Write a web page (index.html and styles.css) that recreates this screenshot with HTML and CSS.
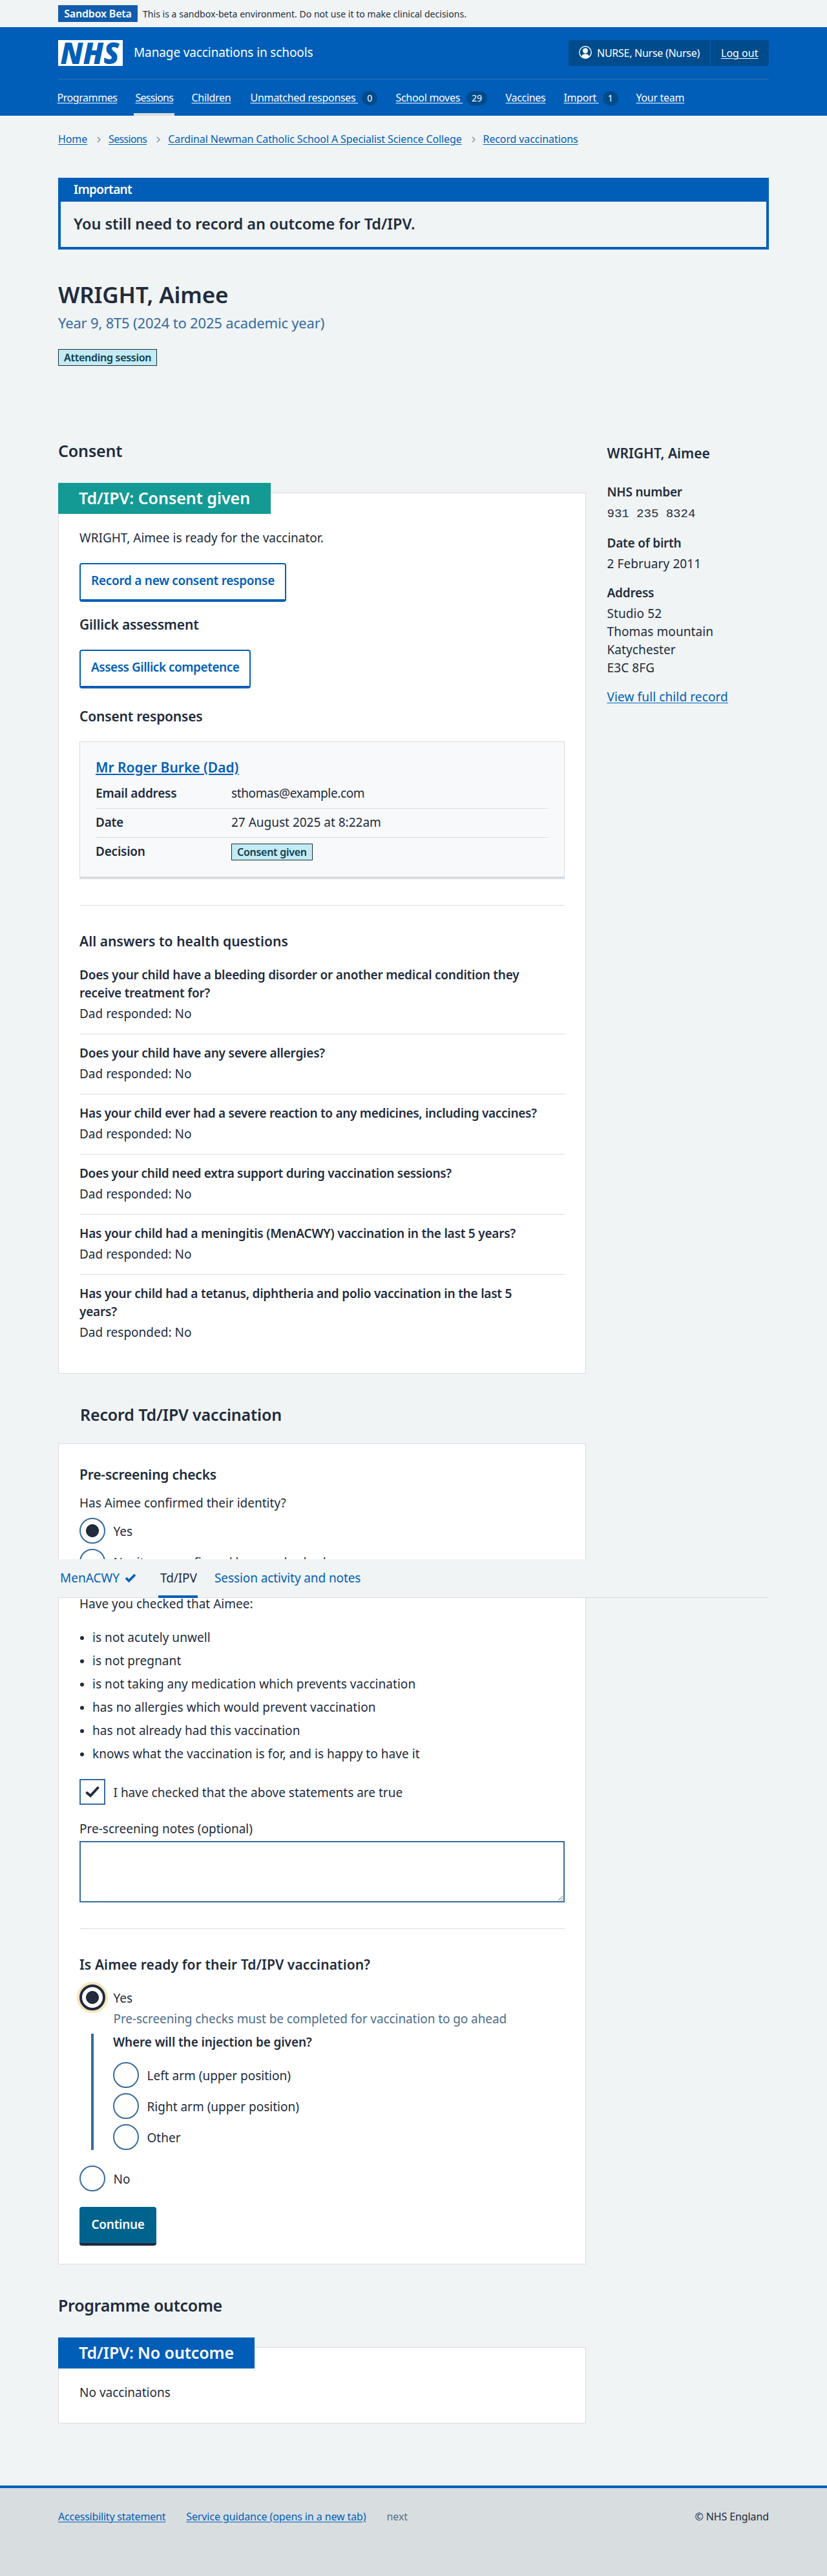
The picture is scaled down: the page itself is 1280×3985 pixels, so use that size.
FILE: index.html
```html
<!DOCTYPE html>
<html lang="en">
<head>
<meta charset="utf-8">
<title>WRIGHT, Aimee – Manage vaccinations in schools</title>
<link rel="stylesheet" href="styles.css">
</head>
<body>
<div class="environment container">
  <strong class="environment-tag">Sandbox Beta</strong>
  <span class="environment-text">This is a sandbox-beta environment. Do not use it to make clinical decisions.</span>
</div>

<header class="header">
  <div class="container">
    <div class="header-main">
      <svg class="logo" width="100" height="40" viewBox="0 0 100 40" role="img" aria-label="NHS">
        <rect width="100" height="40" fill="#fff"/>
        <text x="3.500" y="36.500" textLength="91" lengthAdjust="spacingAndGlyphs">NHS</text>
      </svg>
      <span class="service-name">Manage vaccinations in schools</span>
      <div class="account">
        <span class="account-user">
          <svg width="20" height="20" viewBox="0 0 20 20" aria-hidden="true">
            <defs><clipPath id="head"><circle cx="10" cy="10" r="9"/></clipPath></defs>
            <circle cx="10" cy="10" r="9.2" fill="none" stroke="#fff" stroke-width="1.4"/>
            <g clip-path="url(#head)" fill="#fff"><ellipse cx="10" cy="7.6" rx="3.9" ry="4.1"/><path d="M4.3 20v-3.500c0-2.600 2.200-3.900 5.700-3.900s5.700 1.300 5.700 3.900V20z"/></g>
          </svg>
          NURSE, Nurse (Nurse)</span>
        <a class="account-logout" href="#">Log out</a>
      </div>
    </div>
    <nav class="nav">
      <div><a href="#">Programmes</a></div>
      <div class="nav-current"><a href="#">Sessions</a></div>
      <div><a href="#">Children</a></div>
      <div><a href="#">Unmatched responses&nbsp;</a><span class="count">0</span></div>
      <div><a href="#">School moves&nbsp;</a><span class="count">29</span></div>
      <div><a href="#">Vaccines</a></div>
      <div><a href="#">Import&nbsp;</a><span class="count">1</span></div>
      <div><a href="#">Your team</a></div>
    </nav>
  </div>
</header>

<div class="container">
  <nav class="breadcrumb">
    <a href="#">Home</a>
    <svg class="chevron" width="6" height="10" viewBox="0 0 6 10"><path d="M1 1l4 4-4 4"/></svg>
    <a class="breadcrumb-sessions" href="#">Sessions</a>
    <svg class="chevron" width="6" height="10" viewBox="0 0 6 10"><path d="M1 1l4 4-4 4"/></svg>
    <a href="#">Cardinal Newman Catholic School A Specialist Science College</a>
    <svg class="chevron" width="6" height="10" viewBox="0 0 6 10"><path d="M1 1l4 4-4 4"/></svg>
    <a href="#">Record vaccinations</a>
  </nav>

  <section class="banner">
    <h2 class="banner-title">Important</h2>
    <p class="banner-text">You still need to record an outcome for Td/IPV.</p>
  </section>

  <h1 class="page-title">WRIGHT, Aimee</h1>
  <p class="caption">Year 9, 8T5 (2024 to 2025 academic year)</p>
  <strong class="tag">Attending session</strong>

  <div class="columns">
    <main class="main">
      <h2 class="heading-m">Consent</h2>
      <section class="card consent">
        <h3 class="card-label green">Td/IPV: Consent given</h3>
        <p>WRIGHT, Aimee is ready for the vaccinator.</p>
        <a class="button secondary" href="#">Record a new consent response</a>
        <h4 class="heading-s gillick">Gillick assessment</h4>
        <a class="button secondary assess" href="#">Assess Gillick competence</a>
        <h4 class="heading-s responses">Consent responses</h4>
        <div class="response">
          <h5 class="heading-s"><a href="#">Mr Roger Burke (Dad)</a></h5>
          <dl class="summary">
            <div><dt>Email address</dt><dd class="email">sthomas@example.com</dd></div>
            <div><dt>Date</dt><dd>27 August 2025 at 8:22am</dd></div>
            <div><dt>Decision</dt><dd><strong class="tag">Consent given</strong></dd></div>
          </dl>
        </div>
        <hr>
        <h4 class="heading-s answers-title">All answers to health questions</h4>
        <dl class="answers">
          <div><dt>Does your child have a bleeding disorder or another medical condition they<br>receive treatment for?</dt><dd>Dad responded: No</dd></div>
          <div><dt>Does your child have any severe allergies?</dt><dd>Dad responded: No</dd></div>
          <div><dt class="snug">Has your child ever had a severe reaction to any medicines, including vaccines?</dt><dd>Dad responded: No</dd></div>
          <div><dt class="snug">Does your child need extra support during vaccination sessions?</dt><dd>Dad responded: No</dd></div>
          <div><dt>Has your child had a meningitis (MenACWY) vaccination in the last 5 years?</dt><dd>Dad responded: No</dd></div>
          <div><dt>Has your child had a tetanus, diphtheria and polio vaccination in the last 5<br>years?</dt><dd>Dad responded: No</dd></div>
        </dl>
      </section>

      <h2 class="heading-m record-title">Record Td/IPV vaccination</h2>
      <section class="card record">
        <h3 class="heading-s">Pre-screening checks</h3>
        <p class="identity">Has Aimee confirmed their identity?</p>
        <div class="choices">
          <label class="choice"><span class="radio checked"></span><span>Yes</span></label>
          <label class="choice"><span class="radio"></span><span>No, it was confirmed by somebody else</span></label>
        </div>
        <p class="checked-that">Have you checked that Aimee:</p>
        <ul class="checks">
          <li>is not acutely unwell</li>
          <li>is not pregnant</li>
          <li>is not taking any medication which prevents vaccination</li>
          <li>has no allergies which would prevent vaccination</li>
          <li>has not already had this vaccination</li>
          <li>knows what the vaccination is for, and is happy to have it</li>
        </ul>
        <label class="choice confirm"><span class="checkbox"><svg width="22" height="18" viewBox="0 0 22 18"><path d="M1.500 9.500l6.500 5.500L20.500 1.500"/></svg></span><span>I have checked that the above statements are true</span></label>
        <label class="notes-label" for="notes">Pre-screening notes (optional)</label>
        <textarea id="notes" class="notes"></textarea>
        <hr>
        <h3 class="heading-s ready">Is Aimee ready for their Td/IPV vaccination?</h3>
        <label class="choice"><span class="radio checked focused"></span><span>Yes</span></label>
        <p class="hint">Pre-screening checks must be completed for vaccination to go ahead</p>
        <div class="conditional">
          <h4>Where will the injection be given?</h4>
          <div class="choices">
            <label class="choice"><span class="radio"></span><span>Left arm (upper position)</span></label>
            <label class="choice"><span class="radio"></span><span>Right arm (upper position)</span></label>
            <label class="choice"><span class="radio"></span><span>Other</span></label>
          </div>
        </div>
        <label class="choice not-ready"><span class="radio"></span><span>No</span></label>
        <button class="button primary">Continue</button>
      </section>

      <h2 class="heading-m outcome-title">Programme outcome</h2>
      <section class="card outcome">
        <h3 class="card-label blue">Td/IPV: No outcome</h3>
        <p>No vaccinations</p>
      </section>
    </main>

    <aside class="sidebar">
      <h2 class="heading-s">WRIGHT, Aimee</h2>
      <dl>
        <dt>NHS number</dt><dd class="nhs-number">931&nbsp;235&nbsp;8324</dd>
        <dt>Date of birth</dt><dd>2 February 2011</dd>
        <dt>Address</dt><dd>Studio 52<br>Thomas mountain<br>Katychester<br>E3C 8FG</dd>
      </dl>
      <a href="#">View full child record</a>
    </aside>
  </div>
</div>

<nav class="sticky-nav">
  <a class="menacwy" href="#">MenACWY <svg width="18" height="14" viewBox="0 0 18 14"><path d="M2 7l4.500 4.500L16 2"/></svg></a>
  <a class="current" href="#">Td/IPV</a>
  <a class="activity" href="#">Session activity and notes</a>
</nav>

<footer class="footer">
  <div class="container footer-row">
    <a class="accessibility" href="#">Accessibility statement</a>
    <a href="#">Service guidance (opens in a new tab)</a>
    <span class="release">next</span>
    <span class="copyright">© NHS England</span>
  </div>
</footer>
</body>
</html>
```
FILE: styles.css
```css
* { box-sizing: border-box; }
body {
  margin: 0;
  position: relative;
  background: #f0f4f5;
  color: #212b3c;
  font: 400 19px/28px "Noto Sans", "Open Sans", sans-serif;
}
h1, h2, h3, h4, h5, p, dl, dd, ul { margin: 0; padding: 0; font-size: inherit; }
dt, h4, strong { font-weight: 600; letter-spacing: -0.22px; }
a { color: #005eb8; text-underline-offset: 2px; text-decoration-thickness: 1px; }
hr { margin: 40px 0 0; border: 0; border-top: 1px solid #d8dde0; }
.container { width: 1100px; margin: 0 auto; }

/* Environment bar */
.environment { display: flex; align-items: center; height: 42px; gap: 8px; }
.environment-tag {
  width: 123px; height: 26px; padding-top: 1px;
  background: #115cad; color: #fff;
  font-size: 16px; line-height: 25px; text-align: center; letter-spacing: -0.19px;
}
.environment-text { font-size: 14px; line-height: 20px; padding-top: 2px; letter-spacing: 0.03px; }

/* Header */
.header { height: 137px; background: #005eb8; color: #fff; }
.header a { color: #fff; }
.header-main { display: flex; align-items: center; height: 81px; padding-bottom: 1px; border-bottom: 1px solid #336fa8; }
.logo text { font: italic 800 46px "Open Sans", sans-serif; fill: #005eb8; }
.service-name { margin-left: 17px; letter-spacing: -0.12px; padding-bottom: 2px; }
.account {
  display: flex; margin-left: auto; height: 40px;
  font-size: 16px; line-height: 40px; border-radius: 4px; background: #004b8c; letter-spacing: -0.27px;
}
.account-user { display: flex; width: 220px; padding-left: 16px; gap: 8px; border-right: 1px solid #005eb8; }
.account-user svg { margin-top: 9px; }
.account-logout { padding-left: 16px; width: 90px; letter-spacing: 0; }
.nav {
  display: grid; grid-template-columns: 121px 87px 91px 225px 170px 90px 112px auto;
  margin-left: -4px; font-size: 16px; line-height: 24px; letter-spacing: -0.3px;
}
.nav > div { height: 56px; padding: 16px 2.500px; white-space: nowrap; }
.nav > div:first-child a { letter-spacing: -0.44px; }
.nav > .nav-current { width: 63px; border-bottom: 4px solid #d8dde0; letter-spacing: -0.72px; }
.count {
  display: inline-block; margin-left: 6px; min-width: 24px; height: 22px; padding: 0 8px;
  border-radius: 12px; background: #004b8c; font-size: 14px; line-height: 22px; text-align: center;
  vertical-align: 0; letter-spacing: 0;
}

/* Breadcrumb */
.breadcrumb {
  display: flex; align-items: center; padding-top: 24px;
  font-size: 16px; line-height: 24px; letter-spacing: -0.12px;
}
.breadcrumb-sessions { letter-spacing: -0.65px; }
.chevron { margin: 2px 12px 0 15px; fill: none; stroke: #84929c; stroke-width: 1.5; }

/* Banner */
.banner { margin-top: 48px; height: 111px; border: 4px solid #005eb8; }
.banner-title { padding: 0 20px 5px; background: #005eb8; color: #fff; font-weight: 600; letter-spacing: -0.62px; }
.banner-text { padding: 18px 20px; font-size: 23.5px; line-height: 32px; font-weight: 600; letter-spacing: -0.05px; }

.page-title { margin-top: 48px; font-size: 35px; line-height: 44px; font-weight: 600; letter-spacing: -0.15px; }
.caption { margin: 5px 0 25px; font-size: 22px; line-height: 32px; color: #376b9f; letter-spacing: -0.18px; }
.tag {
  display: block; width: fit-content; height: 26px; padding: 0 8px; border: 1px solid #212b3c;
  background: #c2ebf3; color: #0e3a4e; font-size: 16px; line-height: 24px; letter-spacing: -0.27px;
}

/* Columns */
.columns { display: flex; align-items: flex-start; padding-top: 115px; }
.main { width: 817px; }
.sidebar { margin-left: 32.500px; padding-top: 6px; }
.heading-m, .card-label { font-size: 25px; line-height: 32px; font-weight: 600; letter-spacing: -0.15px; }
.heading-s { font-size: 21px; line-height: 28px; font-weight: 600; letter-spacing: -0.18px; }

/* Cards */
.card { padding: 0 32px; border: 1px solid #d8dde0; background: #fff; }
.card-label { width: fit-content; height: 48px; margin: -16px 0 23px -33px; padding: 7px 32px; color: #fff; letter-spacing: -0.03px; }
.green { background: #139a94; }
.blue { background: #005eb8; letter-spacing: -0.1px; }
.consent { margin-top: 49px; padding-bottom: 49px; }
.button {
  display: block; width: fit-content; height: 60px; padding: 11px 16px 15px; border: 2px solid; border-bottom-width: 4px;
  border-radius: 4px; font: inherit; font-weight: 600; letter-spacing: -0.28px; text-decoration: none;
}
.secondary { margin-top: 25px; border-color: #005eb8; background: #fff; }
.assess { letter-spacing: -0.48px; }
.primary { margin-top: 24px; border: 0; border-bottom: 4px solid #212b3c; padding: 13px 18.500px 15px; background: #00638e; color: #fff; }
.gillick { margin-top: 21px; }
.responses { margin: 29px 0 25px; }

.response { height: 213px; padding: 25px 24px 0; border: 1px solid #d8dde0; border-bottom-width: 4px; background: #f8f9fb; }
.response a { letter-spacing: 0; text-decoration-thickness: 2px; }
.summary { margin-top: 5px; }
.summary > div { display: grid; grid-template-columns: 210px auto; height: 45px; padding-top: 7px; border-bottom: 1px solid #d8dde0; }
.summary > div:last-child { border: 0; }
.summary .tag { margin-top: 2px; }
.summary .email { letter-spacing: -0.38px; }

.answers-title { margin: 41px 0 24px; letter-spacing: 0.07px; }
.answers > div + div { margin-top: 17px; padding-top: 15px; border-top: 1px solid #d8dde0; }
.answers dd { margin-top: 4px; }
.answers .snug { letter-spacing: -0.29px; }

/* Recording form */
.record-title { margin: 47px 0 29px 34px; }
.record { padding: 33px 32px 28px; }
.identity { margin: 16px 0 9px; }
.choices { display: grid; gap: 8px; }
.choice { display: flex; gap: 12.500px; height: 40px; line-height: 28px; }
.choice > span:last-child { padding-top: 7px; }
.radio, .checkbox { flex: none; width: 40px; height: 40px; border: 2px solid #376b9f; background: #fff; }
.radio { border-radius: 50%; }
.radio.checked { background: radial-gradient(circle, #212b3c 9.600px, #fff 10.300px); }
.radio.focused { border: 4px solid #212b3c; box-shadow: 0 0 0 4px #f7e5b9; }
.checkbox { display: grid; place-items: center; }
.checkbox path { fill: none; stroke: #212b3c; stroke-width: 4; }
.checked-that { margin: 31px 0 24px; }
.checks { display: grid; gap: 8px; padding-left: 20px; list-style: none; letter-spacing: 0.05px; }
.checks li::before {
  content: ""; float: left; width: 6px; height: 6px; margin: 12px 0 0 -19px; border-radius: 50%; background: #212b3c;
}
.confirm { margin-top: 25px; }
.notes-label { display: block; margin: 23px 0 5px; }
.notes { display: block; width: 100%; height: 95px; border: 2px solid #376b9f; background: #fff; resize: vertical; }
.ready { margin: 41px 0 17px; letter-spacing: 0.1px; }
.hint { margin: -1px 0 0 52.500px; color: #4c6e8a; letter-spacing: -0.08px; }
.conditional { display: flow-root; height: 180px; margin: 9px 0 24px 18px; padding-left: 30px; border-left: 4px solid #376b9f; }
.conditional h4 { margin: -1px 0 17px; letter-spacing: -0.1px; }

.outcome-title { margin-top: 47px; letter-spacing: -0.3px; }
.outcome { margin-top: 49px; padding-bottom: 33px; }

/* Sidebar */
.sidebar h2 { margin-bottom: 32px; letter-spacing: 0; }
.sidebar dd { margin: 4px 0 17px; letter-spacing: 0.1px; }
.sidebar .nhs-number { margin: 6px 0 17px; font-family: "Liberation Mono", monospace; letter-spacing: 0; }
.sidebar a { letter-spacing: 0.12px; }

.sticky-nav {
  position: absolute; left: 90px; top: 2412px; display: flex; width: 1100px; height: 60px;
  border-bottom: 1px solid #d8dde0; background: #f0f4f5;
}
.sticky-nav a { height: 60px; padding: 15px 3px 0; text-decoration: none; }
.sticky-nav .menacwy { width: 128px; white-space: nowrap; }
.sticky-nav svg { margin-left: 3px; fill: none; stroke: #005eb8; stroke-width: 3.800; }
.sticky-nav .current { width: 61px; margin-left: 27px; border-bottom: 4px solid #005eb8; color: #212b3c; letter-spacing: -0.1px; }
.sticky-nav .activity { margin-left: 23px; letter-spacing: -0.1px; }

/* Footer */
.footer { height: 140px; margin-top: 96px; padding-top: 32px; border-top: 4px solid #005eb8; background: #d8dde0; }
.footer-row { display: flex; gap: 32px; font-size: 16px; line-height: 24px; letter-spacing: -0.1px; }
.accessibility { letter-spacing: -0.22px; }
.release { color: #5c7080; }
.copyright { margin-left: auto; }
```
